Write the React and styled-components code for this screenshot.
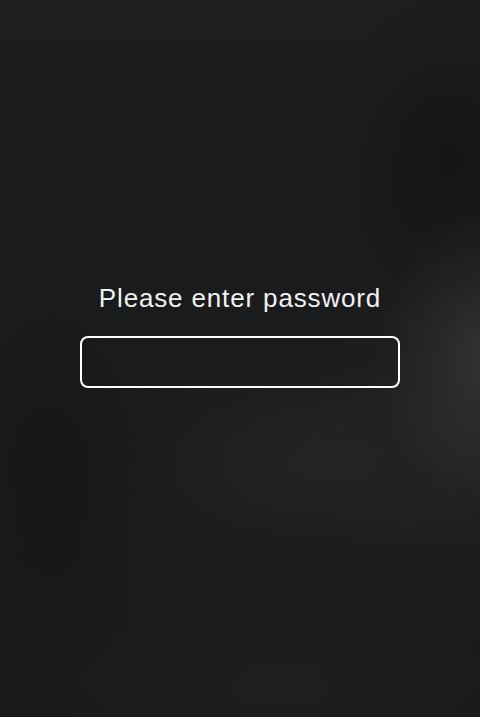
import styled, { createGlobalStyle } from 'styled-components';

const GlobalStyle = createGlobalStyle`
  html, body {
    margin: 0;
    padding: 0;
    height: 100%;
  }
  body {
    font-family: "Liberation Sans", Arial, sans-serif;
    background: #18191b;
  }
  #root {
    height: 100%;
  }
`;

/** Lock screen -- blurred dark backdrop */
const Screen = styled.div`
  box-sizing: border-box;
  width: 100%;
  height: 717px;
  display: flex;
  flex-direction: column;
  align-items: center;
  padding-top: 282px;
  overflow: hidden;
  background:
    radial-gradient(ellipse 110px 150px at 485px 355px, rgba(58, 59, 61, 0.7) 0%, rgba(58, 59, 61, 0.3) 45%, rgba(58, 59, 61, 0) 100%),
    radial-gradient(ellipse 170px 190px at 470px 430px, rgba(44, 45, 47, 0.45) 0%, rgba(44, 45, 47, 0.15) 50%, rgba(44, 45, 47, 0) 100%),
    radial-gradient(ellipse 200px 110px at 320px 460px, rgba(46, 47, 49, 0.45) 0%, rgba(46, 47, 49, 0.15) 55%, rgba(46, 47, 49, 0) 100%),
    radial-gradient(ellipse 220px 90px at 280px 690px, rgba(40, 41, 43, 0.35) 0%, rgba(40, 41, 43, 0) 100%),
    radial-gradient(ellipse 130px 170px at 450px 160px, rgba(14, 15, 17, 0.55) 0%, rgba(14, 15, 17, 0) 100%),
    radial-gradient(ellipse 120px 210px at 50px 480px, rgba(15, 16, 18, 0.45) 0%, rgba(15, 16, 18, 0) 100%),
    linear-gradient(180deg, #1d1e20 0%, #1a1b1d 40%, #1b1c1e 70%, #18191b 100%);
`;

const Prompt = styled.h1`
  margin: 0;
  font-size: 26px;
  line-height: 32px;
  font-weight: 400;
  letter-spacing: 0.85px;
  color: #f2f2f2;
`;

const PasswordField = styled.input`
  box-sizing: border-box;
  margin-top: 22px;
  width: 320px;
  height: 52px;
  border: 2px solid #ffffff;
  border-radius: 8px;
  background: transparent;
  color: #fff;
  font-size: 20px;
  padding: 0 12px;
  outline: none;
`;

export default function App() {
  return (
    <>
      <GlobalStyle />
      <Screen>
        <Prompt>Please enter password</Prompt>
        <PasswordField type="password" aria-label="Password" />
      </Screen>
    </>
  );
}
